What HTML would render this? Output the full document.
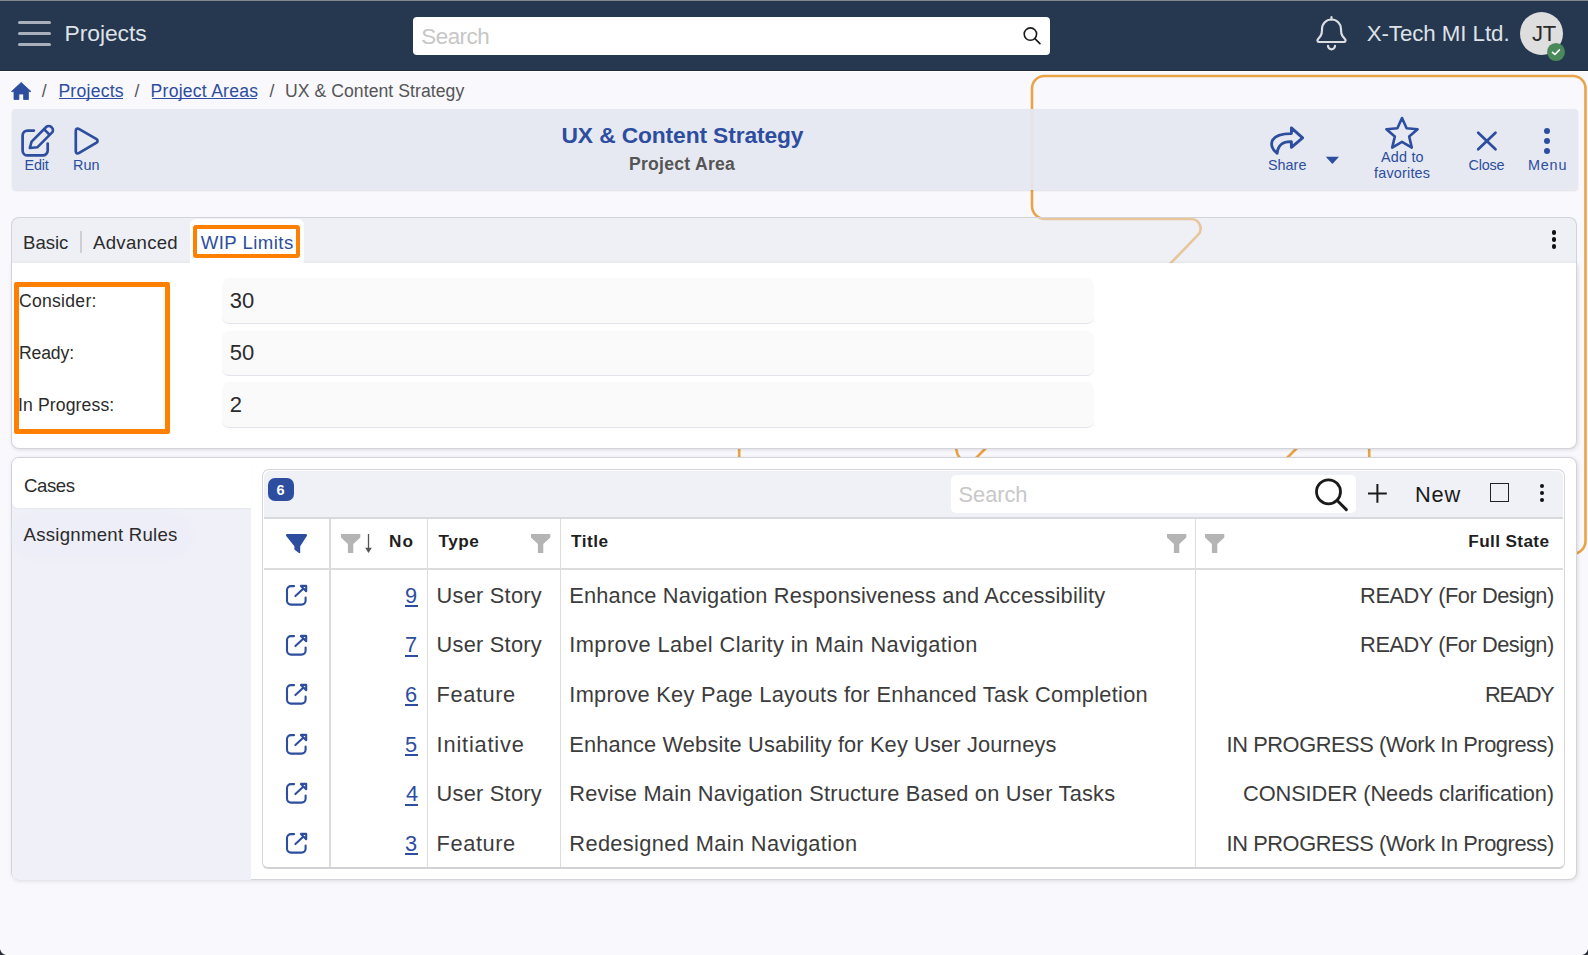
<!DOCTYPE html><html><head><meta charset='utf-8'><style>
*{margin:0;padding:0;box-sizing:border-box}
html,body{width:1588px;height:955px;overflow:hidden;background:#f8f8fd;font-family:"Liberation Sans",sans-serif;position:relative}
.a{position:absolute}
.t{position:absolute;white-space:nowrap}
svg{position:absolute;overflow:visible}
</style></head><body>
<svg style="left:0;top:0" width="1588" height="955" viewBox="0 0 1588 955"><path d="M1191 219 H1045 a13 13 0 0 1 -13 -13 V88.5 a12.5 12.5 0 0 1 12.5 -12.5 H1573 a12.5 12.5 0 0 1 12.5 12.5 V541 a13 13 0 0 1 -13 13 H1565" fill="none" stroke="#e9a445" stroke-width="2.6"/><path d="M1191 219 a9.5 9.5 0 0 1 6.8 16.2 L1168 266" fill="none" stroke="#e9a445" stroke-width="2.6"/><path d="M739.2 440 V465 M958 440 a16 16 0 0 0 2 18 M990 444 L972 462 M1301 444 L1283 462 M1369.2 440 V465" fill="none" stroke="#e9a445" stroke-width="2.6"/></svg>
<div class="a" style="left:0px;top:0px;width:1588px;height:1px;background:#80878d"></div>
<div class="a" style="left:0px;top:1px;width:1588px;height:70px;background:#263750"></div>
<div class="a" style="left:0px;top:70px;width:1588px;height:1px;background:#1b2b43"></div>
<div class="a" style="left:0px;top:71px;width:1588px;height:1px;background:#ffffff"></div>
<div class="a" style="left:18px;top:20.9px;width:33px;height:3px;background:#a9b0bb;border-radius:2px"></div>
<div class="a" style="left:18px;top:31.9px;width:33px;height:3px;background:#a9b0bb;border-radius:2px"></div>
<div class="a" style="left:18px;top:42.8px;width:33px;height:3px;background:#a9b0bb;border-radius:2px"></div>
<div class="t" style="left:64.60px;top:22.00px;font-size:22.9px;line-height:22.9px;color:#dfe2e6;letter-spacing:-0.086px;">Projects</div>
<div class="a" style="left:412.6px;top:16.8px;width:637.4px;height:38.1px;background:#fff;border-radius:4px"></div>
<div class="t" style="left:421.30px;top:26.00px;font-size:22.4px;line-height:22.4px;color:#c6c6c6;letter-spacing:-0.52px;">Search</div>
<svg style="left:1020px;top:26px" width="22" height="20" viewBox="0 0 22 20"><circle cx="10.4" cy="8.1" r="6.2" fill="none" stroke="#1a1a1a" stroke-width="1.6"/><line x1="14.9" y1="12.6" x2="19.9" y2="17.6" stroke="#1a1a1a" stroke-width="1.7" stroke-linecap="round"/></svg>
<svg style="left:1305px;top:10px" width="55" height="45" viewBox="0 0 55 45"><path d="M26.5 7 V9.5" stroke="#dcdee2" stroke-width="2.2" stroke-linecap="round"/><path d="M14 32 H39 a1.6 1.6 0 0 0 1.2 -2.6 L37.5 26 C36.3 24.3 36 22.5 36 20 V19 a9.5 9.5 0 0 0 -19 0 V20 C17 22.5 16.7 24.3 15.5 26 L12.8 29.4 a1.6 1.6 0 0 0 1.2 2.6 Z" fill="none" stroke="#dcdee2" stroke-width="2.2" stroke-linejoin="round"/><path d="M23 35.8 a3.5 3.5 0 0 0 7 0" fill="none" stroke="#dcdee2" stroke-width="2.2" stroke-linecap="round"/></svg>
<div class="t" style="left:1366.70px;top:23.00px;font-size:22.3px;line-height:22.3px;color:#dfe2e6;letter-spacing:-0.062px;">X-Tech MI Ltd.</div>
<div class="a" style="left:1520px;top:12px;width:43px;height:43px;background:#dedede;border-radius:50%"></div>
<div class="t" style="left:1532.00px;top:23.00px;font-size:22px;line-height:22px;color:#2a2a2a;letter-spacing:-0.3px;">JT</div>
<div class="a" style="left:1547.2px;top:43px;width:18.1px;height:18px;background:#4a8a5a;border-radius:50%"></div>
<svg style="left:1550px;top:46px" width="12" height="12" viewBox="0 0 12 12"><path d="M2.5 6.3 L4.9 8.5 L9.4 3.9" fill="none" stroke="#fff" stroke-width="1.6" stroke-linecap="round" stroke-linejoin="round"/></svg>
<svg style="left:11px;top:81.5px" width="21" height="18" viewBox="0 0 21 18"><path d="M10.2 0.5 L20 9.6 H17.4 V17.5 H12.6 V12 H7.9 V17.5 H3 V9.6 H0.4 Z" fill="#2d4d9f" stroke="#2d4d9f" stroke-width="0.8" stroke-linejoin="round"/></svg>
<div class="t" style="left:41.80px;top:83.00px;font-size:17.6px;line-height:17.6px;color:#555;">/</div>
<div class="t" style="left:58.40px;top:83.00px;font-size:17.6px;line-height:17.6px;color:#2d4d9f;letter-spacing:0.243px;">Projects</div>
<div class="a" style="left:59.4px;top:98px;width:63.7px;height:1.2px;background:#2d4d9f"></div>
<div class="t" style="left:134.50px;top:83.00px;font-size:17.6px;line-height:17.6px;color:#555;">/</div>
<div class="t" style="left:150.60px;top:83.00px;font-size:17.6px;line-height:17.6px;color:#2d4d9f;letter-spacing:0.233px;">Project Areas</div>
<div class="a" style="left:151.6px;top:98px;width:105.8px;height:1.2px;background:#2d4d9f"></div>
<div class="t" style="left:269.50px;top:83.00px;font-size:17.6px;line-height:17.6px;color:#555;">/</div>
<div class="t" style="left:284.90px;top:83.00px;font-size:17.6px;line-height:17.6px;color:#555;letter-spacing:0.07px;">UX &amp; Content Strategy</div>
<div class="a" style="left:12px;top:109px;width:1566px;height:81px;background:rgba(228,231,240,0.93);border-radius:4px;box-shadow:0 1px 2px rgba(0,0,0,0.10)"></div>
<svg style="left:20px;top:124px" width="34" height="34" viewBox="0 0 34 34"><path d="M13.9 6.6 H7.6 a5 5 0 0 0 -5 5 V26.4 a5 5 0 0 0 5 5 H22.7 a5 5 0 0 0 5 -5 V19.5" fill="none" stroke="#2d4d9f" stroke-width="2.7" stroke-linecap="round"/><path d="M9.8 24 L11.6 17.6 L26.2 3 a3.6 3.6 0 0 1 5.1 0 l0.6 0.6 a3.6 3.6 0 0 1 0 5.1 L17.3 23.3 Z M24 5.2 L29.8 11" fill="none" stroke="#2d4d9f" stroke-width="2.6" stroke-linejoin="round"/></svg>
<div class="t" style="left:24.50px;top:158.00px;font-size:14.4px;line-height:14.4px;color:#2d4d9f;letter-spacing:-0.167px;">Edit</div>
<svg style="left:73px;top:126px" width="28" height="30" viewBox="0 0 28 30"><path d="M2.8 4.5 a2 2 0 0 1 3 -1.7 L23.6 13.2 a2 2 0 0 1 0 3.4 L5.8 27.2 a2 2 0 0 1 -3 -1.7 Z" fill="none" stroke="#2d4d9f" stroke-width="2.7" stroke-linejoin="round"/></svg>
<div class="t" style="left:73.00px;top:158.00px;font-size:14.4px;line-height:14.4px;color:#2d4d9f;">Run</div>
<div class="t" style="left:561.50px;top:124.00px;font-size:22.8px;line-height:22.8px;color:#2d4d9f;font-weight:700;letter-spacing:-0.125px;">UX &amp; Content Strategy</div>
<div class="t" style="left:629.00px;top:156.00px;font-size:17.6px;line-height:17.6px;color:#555;font-weight:700;letter-spacing:0.255px;">Project Area</div>
<svg style="left:1265px;top:122px" width="45" height="40" viewBox="0 0 45 40"><path d="M26.4 11.6 V5.9 L37.6 15.9 L26.4 25.3 V19.6 C18.5 19.4 13.2 21.8 12.2 31.2 C6.8 27.3 5.6 22.2 7.6 18 C10.2 13.5 16 11.6 26.4 11.6 Z" fill="none" stroke="#2d4d9f" stroke-width="2.9" stroke-linejoin="round"/></svg>
<div class="t" style="left:1267.90px;top:158.00px;font-size:14.4px;line-height:14.4px;color:#2d4d9f;letter-spacing:0.025px;">Share</div>
<svg style="left:1325px;top:156px" width="15" height="9" viewBox="0 0 15 9"><path d="M0.8 0.8 H14 L7.4 8 Z" fill="#2d4d9f"/></svg>
<svg style="left:1383px;top:116px" width="38" height="35" viewBox="0 0 38 35"><path d="M19 2 L23.6 12.3 L34.6 13.2 L26.2 20.6 L28.8 31.6 L19 25.8 L9.2 31.6 L11.8 20.6 L3.4 13.2 L14.4 12.3 Z" fill="none" stroke="#2d4d9f" stroke-width="2.6" stroke-linejoin="round"/></svg>
<div class="t" style="left:1381.00px;top:150.00px;font-size:14.4px;line-height:14.4px;color:#2d4d9f;letter-spacing:0.2px;">Add to</div>
<div class="t" style="left:1374.00px;top:166.00px;font-size:14.4px;line-height:14.4px;color:#2d4d9f;letter-spacing:0.2px;">favorites</div>
<svg style="left:1475px;top:129px" width="24" height="24" viewBox="0 0 24 24"><path d="M3.2 3.8 L20.5 20.3 M20.5 3.8 L3.2 20.3" stroke="#2d4d9f" stroke-width="2.7" stroke-linecap="round"/></svg>
<div class="t" style="left:1468.60px;top:158.00px;font-size:14.4px;line-height:14.4px;color:#2d4d9f;letter-spacing:-0.225px;">Close</div>
<div class="a" style="left:1543.7px;top:127.85px;width:6.3px;height:6.3px;background:#2d4d9f;border-radius:50%"></div>
<div class="a" style="left:1543.7px;top:137.85px;width:6.3px;height:6.3px;background:#2d4d9f;border-radius:50%"></div>
<div class="a" style="left:1543.7px;top:147.95px;width:6.3px;height:6.3px;background:#2d4d9f;border-radius:50%"></div>
<div class="t" style="left:1527.90px;top:158.00px;font-size:14.4px;line-height:14.4px;color:#2d4d9f;letter-spacing:0.867px;">Menu</div>
<div class="a" style="left:11px;top:217px;width:1565.5px;height:47.5px;background:rgba(228,232,239,0.5);border:1px solid #d3d3dc;border-bottom:1px solid #dcdde5;border-radius:8px 8px 0 0"></div>
<div class="a" style="left:11px;top:263px;width:1565.5px;height:185.5px;background:#fff;border:1px solid #d3d3dc;border-top:none;border-radius:0 0 8px 8px;box-shadow:1px 1px 4px rgba(0,0,0,0.12)"></div>
<div class="a" style="left:190px;top:219px;width:114px;height:45px;background:#fff;border-radius:6px 6px 0 0"></div>
<div class="t" style="left:23.10px;top:234.00px;font-size:18.6px;line-height:18.6px;color:#2b2b2b;letter-spacing:-0.075px;">Basic</div>
<div class="a" style="left:80px;top:230.5px;width:2px;height:22px;background:#cfcfd4"></div>
<div class="t" style="left:93.00px;top:234.00px;font-size:18.6px;line-height:18.6px;color:#2b2b2b;letter-spacing:0.286px;">Advanced</div>
<div class="t" style="left:200.70px;top:234.00px;font-size:18.6px;line-height:18.6px;color:#2d4d9f;letter-spacing:0.444px;">WIP Limits</div>
<div class="a" style="left:192.8px;top:225px;width:107.2px;height:32.7px;border:4.9px solid #ff7f00;border-radius:3px"></div>
<div class="a" style="left:1551.6px;top:230.39999999999998px;width:4.6px;height:4.6px;background:#111;border-radius:50%"></div>
<div class="a" style="left:1551.6px;top:237.39999999999998px;width:4.6px;height:4.6px;background:#111;border-radius:50%"></div>
<div class="a" style="left:1551.6px;top:244.2px;width:4.6px;height:4.6px;background:#111;border-radius:50%"></div>
<div class="a" style="left:222px;top:278px;width:871.7px;height:46.30000000000001px;background:#fafafb;border-radius:7px;border-bottom:1.5px solid #e2e3ef"></div>
<div class="a" style="left:222px;top:330.5px;width:871.7px;height:45.89999999999998px;background:#fafafb;border-radius:7px;border-bottom:1.5px solid #e2e3ef"></div>
<div class="a" style="left:222px;top:382.1px;width:871.7px;height:46.299999999999955px;background:#fafafb;border-radius:7px;border-bottom:1.5px solid #e2e3ef"></div>
<div class="t" style="left:229.80px;top:290.00px;font-size:22px;line-height:22px;color:#2b2b2b;">30</div>
<div class="t" style="left:229.80px;top:342.00px;font-size:22px;line-height:22px;color:#2b2b2b;">50</div>
<div class="t" style="left:229.80px;top:394.00px;font-size:22px;line-height:22px;color:#2b2b2b;">2</div>
<div class="t" style="left:19.00px;top:293.00px;font-size:17.6px;line-height:17.6px;color:#2b2b2b;letter-spacing:0.262px;">Consider:</div>
<div class="t" style="left:19.00px;top:345.00px;font-size:17.6px;line-height:17.6px;color:#2b2b2b;letter-spacing:-0.14px;">Ready:</div>
<div class="t" style="left:18.00px;top:397.00px;font-size:17.6px;line-height:17.6px;color:#2b2b2b;letter-spacing:0.127px;">In Progress:</div>
<div class="a" style="left:14.2px;top:282px;width:155.8px;height:151.8px;border:5px solid #ff7f00;border-radius:2px"></div>
<div class="a" style="left:11px;top:456.7px;width:1565.5px;height:423.8px;background:#fff;border:1px solid #d3d3dc;border-radius:8px;box-shadow:1px 1px 4px rgba(0,0,0,0.12)"></div>
<div class="a" style="left:12px;top:498px;width:239px;height:381.5px;background:#eff0f8;border-radius:0 0 0 7px"></div>
<div class="a" style="left:12px;top:457.7px;width:239px;height:50.3px;background:#fff;border-radius:7px 0 0 6px;box-shadow:0 1px 2px rgba(0,0,0,0.04)"></div>
<div class="t" style="left:24.00px;top:477.00px;font-size:18.6px;line-height:18.6px;color:#2b2b2b;letter-spacing:-0.425px;">Cases</div>
<div class="a" style="left:14px;top:515px;width:176px;height:41px;background:#edeef7;border-radius:22px;box-shadow:0 0 4px 2px rgba(236,237,247,0.8)"></div>
<div class="t" style="left:23.50px;top:526.00px;font-size:18.6px;line-height:18.6px;color:#2b2b2b;letter-spacing:0.267px;">Assignment Rules</div>
<div class="a" style="left:262px;top:469px;width:1302.5px;height:399.5px;background:#fff;border:1.5px solid #d6d6dc;border-bottom:2px solid #d2d2d6;border-radius:7px 7px 6px 6px"></div>
<div class="a" style="left:263.5px;top:470.5px;width:1299.5px;height:47px;background:#f0f1f6;border-radius:6px 6px 0 0"></div>
<div class="a" style="left:264px;top:517px;width:1299px;height:2px;background:#d8d9de"></div>
<div class="a" style="left:268px;top:478.3px;width:26px;height:22.4px;background:#2d4d9f;border-radius:7px"></div>
<div class="t" style="left:276.50px;top:483.00px;font-size:14.5px;line-height:14.5px;color:#fff;font-weight:700;">6</div>
<div class="a" style="left:950.5px;top:474.8px;width:405px;height:38.5px;background:#fff;border-radius:5px"></div>
<div class="t" style="left:958.60px;top:484.00px;font-size:21.8px;line-height:21.8px;color:#c8c8c8;letter-spacing:-0.04px;">Search</div>
<svg style="left:1313px;top:477px" width="37" height="35" viewBox="0 0 37 35"><circle cx="15.5" cy="14.8" r="12" fill="none" stroke="#1a1a1a" stroke-width="2.8"/><line x1="24.2" y1="23.5" x2="33.3" y2="32.6" stroke="#1a1a1a" stroke-width="3" stroke-linecap="round"/></svg>
<svg style="left:1367px;top:483px" width="21" height="21" viewBox="0 0 21 21"><path d="M10.4 1 V19.8 M1 10.4 H19.8" stroke="#1a1a1a" stroke-width="2"/></svg>
<div class="t" style="left:1415.00px;top:484.00px;font-size:21.8px;line-height:21.8px;color:#1a1a1a;letter-spacing:0.8px;">New</div>
<div class="a" style="left:1489.6px;top:483.2px;width:19.4px;height:19px;border:1.7px solid #222"></div>
<div class="a" style="left:1539.5px;top:483.7px;width:4.6px;height:4.6px;background:#111;border-radius:50%"></div>
<div class="a" style="left:1539.5px;top:490.7px;width:4.6px;height:4.6px;background:#111;border-radius:50%"></div>
<div class="a" style="left:1539.5px;top:497.7px;width:4.6px;height:4.6px;background:#111;border-radius:50%"></div>
<div class="a" style="left:264px;top:568px;width:1299px;height:2px;background:#dcdcdc"></div>
<div class="a" style="left:329px;top:519px;width:1.5px;height:348px;background:#dcdcdc"></div>
<div class="a" style="left:426.7px;top:519px;width:1.5px;height:348px;background:#dcdcdc"></div>
<div class="a" style="left:559.8px;top:519px;width:1.5px;height:348px;background:#dcdcdc"></div>
<div class="a" style="left:1194.8px;top:519px;width:1.5px;height:348px;background:#dcdcdc"></div>
<svg style="left:285px;top:533px" width="25" height="22" viewBox="0 0 25 22"><path d="M2.2 1 H20.8 a1.3 1.3 0 0 1 1 2.1 L15.2 13.2 V19.4 a0.8 0.8 0 0 1 -1.3 0.6 L10 17 a1 1 0 0 1 -0.6 -0.9 V13.2 L1.2 3.1 a1.3 1.3 0 0 1 1 -2.1 Z" fill="#2d4d9f"/></svg>
<svg style="left:340.8px;top:534px" width="20" height="20" viewBox="0 0 20 20"><path d="M0 0 H19.3 V3.6 L12.3 10 V19 H6.9 V10 L0 3.6 Z" fill="#b4b4b4"/></svg>
<svg style="left:530.8px;top:534px" width="20" height="20" viewBox="0 0 20 20"><path d="M0 0 H19.3 V3.6 L12.3 10 V19 H6.9 V10 L0 3.6 Z" fill="#b4b4b4"/></svg>
<svg style="left:1166.6px;top:534px" width="20" height="20" viewBox="0 0 20 20"><path d="M0 0 H19.3 V3.6 L12.3 10 V19 H6.9 V10 L0 3.6 Z" fill="#b4b4b4"/></svg>
<svg style="left:1205.2px;top:534px" width="20" height="20" viewBox="0 0 20 20"><path d="M0 0 H19.3 V3.6 L12.3 10 V19 H6.9 V10 L0 3.6 Z" fill="#b4b4b4"/></svg>
<svg style="left:364px;top:534px" width="9" height="20" viewBox="0 0 9 20"><path d="M4.5 0 V17" stroke="#555" stroke-width="1.3"/><path d="M1.2 13.8 L4.5 19 L7.8 13.8 Z" fill="#555"/></svg>
<div class="t" style="left:388.90px;top:533.00px;font-size:17.2px;line-height:17.2px;color:#1f1f1f;font-weight:700;letter-spacing:1.1px;">No</div>
<div class="t" style="left:438.40px;top:533.00px;font-size:17.2px;line-height:17.2px;color:#1f1f1f;font-weight:700;letter-spacing:0.533px;">Type</div>
<div class="t" style="left:571.00px;top:533.00px;font-size:17.2px;line-height:17.2px;color:#1f1f1f;font-weight:700;letter-spacing:0.5px;">Title</div>
<div class="t" style="left:1468.30px;top:533.00px;font-size:17.2px;line-height:17.2px;color:#1f1f1f;font-weight:700;letter-spacing:0.367px;">Full State</div>
<svg style="left:284px;top:582.0px" width="26" height="26" viewBox="0 0 26 26"><path d="M10.1 4.1 H7 a4 4 0 0 0 -4 4 V18.6 a4 4 0 0 0 4 4 H17.6 a4 4 0 0 0 4 -4 V15.5" fill="none" stroke="#2d4d9f" stroke-width="2.1" stroke-linecap="round"/><path d="M16.9 3.9 H22.2 V9.3 Z M19.5 6.6 L11.4 14.1" fill="none" stroke="#2d4d9f" stroke-width="2.1" stroke-linecap="round" stroke-linejoin="round"/></svg>
<div class="t" style="left:405.00px;top:585.00px;font-size:21.8px;line-height:21.8px;color:#2d4d9f;">9</div>
<div class="a" style="left:405.3px;top:605.1999999999999px;width:12.4px;height:2.1px;background:#2d4d9f"></div>
<div class="t" style="left:436.60px;top:585.00px;font-size:21.8px;line-height:21.8px;color:#3c3c3c;letter-spacing:0.233px;">User Story</div>
<div class="t" style="left:569.30px;top:585.00px;font-size:21.8px;line-height:21.8px;color:#3c3c3c;letter-spacing:0.174px;">Enhance Navigation Responsiveness and Accessibility</div>
<div class="t" style="left:1360.10px;top:585.00px;font-size:21.8px;line-height:21.8px;color:#3c3c3c;letter-spacing:-0.453px;">READY (For Design)</div>
<svg style="left:284px;top:631.6px" width="26" height="26" viewBox="0 0 26 26"><path d="M10.1 4.1 H7 a4 4 0 0 0 -4 4 V18.6 a4 4 0 0 0 4 4 H17.6 a4 4 0 0 0 4 -4 V15.5" fill="none" stroke="#2d4d9f" stroke-width="2.1" stroke-linecap="round"/><path d="M16.9 3.9 H22.2 V9.3 Z M19.5 6.6 L11.4 14.1" fill="none" stroke="#2d4d9f" stroke-width="2.1" stroke-linecap="round" stroke-linejoin="round"/></svg>
<div class="t" style="left:405.00px;top:634.00px;font-size:21.8px;line-height:21.8px;color:#2d4d9f;">7</div>
<div class="a" style="left:405.3px;top:654.8px;width:12.4px;height:2.1px;background:#2d4d9f"></div>
<div class="t" style="left:436.60px;top:634.00px;font-size:21.8px;line-height:21.8px;color:#3c3c3c;letter-spacing:0.233px;">User Story</div>
<div class="t" style="left:569.30px;top:634.00px;font-size:21.8px;line-height:21.8px;color:#3c3c3c;letter-spacing:0.428px;">Improve Label Clarity in Main Navigation</div>
<div class="t" style="left:1360.10px;top:634.00px;font-size:21.8px;line-height:21.8px;color:#3c3c3c;letter-spacing:-0.453px;">READY (For Design)</div>
<svg style="left:284px;top:681.2px" width="26" height="26" viewBox="0 0 26 26"><path d="M10.1 4.1 H7 a4 4 0 0 0 -4 4 V18.6 a4 4 0 0 0 4 4 H17.6 a4 4 0 0 0 4 -4 V15.5" fill="none" stroke="#2d4d9f" stroke-width="2.1" stroke-linecap="round"/><path d="M16.9 3.9 H22.2 V9.3 Z M19.5 6.6 L11.4 14.1" fill="none" stroke="#2d4d9f" stroke-width="2.1" stroke-linecap="round" stroke-linejoin="round"/></svg>
<div class="t" style="left:405.00px;top:684.00px;font-size:21.8px;line-height:21.8px;color:#2d4d9f;">6</div>
<div class="a" style="left:405.3px;top:704.4px;width:12.4px;height:2.1px;background:#2d4d9f"></div>
<div class="t" style="left:436.60px;top:684.00px;font-size:21.8px;line-height:21.8px;color:#3c3c3c;letter-spacing:0.583px;">Feature</div>
<div class="t" style="left:569.30px;top:684.00px;font-size:21.8px;line-height:21.8px;color:#3c3c3c;letter-spacing:0.273px;">Improve Key Page Layouts for Enhanced Task Completion</div>
<div class="t" style="left:1485.10px;top:684.00px;font-size:21.8px;line-height:21.8px;color:#3c3c3c;letter-spacing:-1.425px;">READY</div>
<svg style="left:284px;top:730.8px" width="26" height="26" viewBox="0 0 26 26"><path d="M10.1 4.1 H7 a4 4 0 0 0 -4 4 V18.6 a4 4 0 0 0 4 4 H17.6 a4 4 0 0 0 4 -4 V15.5" fill="none" stroke="#2d4d9f" stroke-width="2.1" stroke-linecap="round"/><path d="M16.9 3.9 H22.2 V9.3 Z M19.5 6.6 L11.4 14.1" fill="none" stroke="#2d4d9f" stroke-width="2.1" stroke-linecap="round" stroke-linejoin="round"/></svg>
<div class="t" style="left:405.00px;top:734.00px;font-size:21.8px;line-height:21.8px;color:#2d4d9f;">5</div>
<div class="a" style="left:405.3px;top:753.9999999999999px;width:12.4px;height:2.1px;background:#2d4d9f"></div>
<div class="t" style="left:436.60px;top:734.00px;font-size:21.8px;line-height:21.8px;color:#3c3c3c;letter-spacing:0.811px;">Initiative</div>
<div class="t" style="left:569.30px;top:734.00px;font-size:21.8px;line-height:21.8px;color:#3c3c3c;letter-spacing:0.141px;">Enhance Website Usability for Key User Journeys</div>
<div class="t" style="left:1226.60px;top:734.00px;font-size:21.8px;line-height:21.8px;color:#3c3c3c;letter-spacing:-0.421px;">IN PROGRESS (Work In Progress)</div>
<svg style="left:284px;top:780.4px" width="26" height="26" viewBox="0 0 26 26"><path d="M10.1 4.1 H7 a4 4 0 0 0 -4 4 V18.6 a4 4 0 0 0 4 4 H17.6 a4 4 0 0 0 4 -4 V15.5" fill="none" stroke="#2d4d9f" stroke-width="2.1" stroke-linecap="round"/><path d="M16.9 3.9 H22.2 V9.3 Z M19.5 6.6 L11.4 14.1" fill="none" stroke="#2d4d9f" stroke-width="2.1" stroke-linecap="round" stroke-linejoin="round"/></svg>
<div class="t" style="left:406.00px;top:783.00px;font-size:21.8px;line-height:21.8px;color:#2d4d9f;">4</div>
<div class="a" style="left:405.3px;top:803.5999999999999px;width:12.4px;height:2.1px;background:#2d4d9f"></div>
<div class="t" style="left:436.60px;top:783.00px;font-size:21.8px;line-height:21.8px;color:#3c3c3c;letter-spacing:0.233px;">User Story</div>
<div class="t" style="left:569.30px;top:783.00px;font-size:21.8px;line-height:21.8px;color:#3c3c3c;letter-spacing:0.21px;">Revise Main Navigation Structure Based on User Tasks</div>
<div class="t" style="left:1243.00px;top:783.00px;font-size:21.8px;line-height:21.8px;color:#3c3c3c;letter-spacing:-0.09px;">CONSIDER (Needs clarification)</div>
<svg style="left:284px;top:830.0px" width="26" height="26" viewBox="0 0 26 26"><path d="M10.1 4.1 H7 a4 4 0 0 0 -4 4 V18.6 a4 4 0 0 0 4 4 H17.6 a4 4 0 0 0 4 -4 V15.5" fill="none" stroke="#2d4d9f" stroke-width="2.1" stroke-linecap="round"/><path d="M16.9 3.9 H22.2 V9.3 Z M19.5 6.6 L11.4 14.1" fill="none" stroke="#2d4d9f" stroke-width="2.1" stroke-linecap="round" stroke-linejoin="round"/></svg>
<div class="t" style="left:405.00px;top:833.00px;font-size:21.8px;line-height:21.8px;color:#2d4d9f;">3</div>
<div class="a" style="left:405.3px;top:853.1999999999999px;width:12.4px;height:2.1px;background:#2d4d9f"></div>
<div class="t" style="left:436.60px;top:833.00px;font-size:21.8px;line-height:21.8px;color:#3c3c3c;letter-spacing:0.583px;">Feature</div>
<div class="t" style="left:569.30px;top:833.00px;font-size:21.8px;line-height:21.8px;color:#3c3c3c;letter-spacing:0.364px;">Redesigned Main Navigation</div>
<div class="t" style="left:1226.60px;top:833.00px;font-size:21.8px;line-height:21.8px;color:#3c3c3c;letter-spacing:-0.421px;">IN PROGRESS (Work In Progress)</div>
<svg style="left:0;top:0" width="1588" height="955"><path d="M0 955 V949 Q1 954 6 955 Z" fill="#2a2d35"/><path d="M1588 955 V949 Q1587 954 1582 955 Z" fill="#2a2d35"/></svg>
</body></html>
